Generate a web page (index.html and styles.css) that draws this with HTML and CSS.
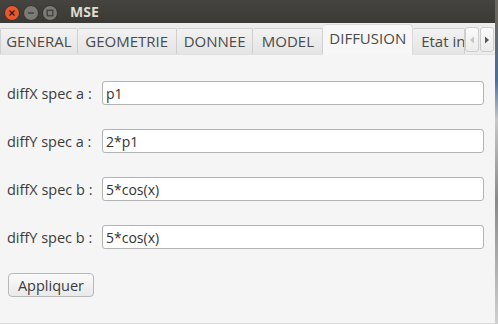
FILE: index.html
```html
<!DOCTYPE html>
<html lang="fr">
<head>
  <meta charset="UTF-8">
  <title>MSE</title>
  <link rel="stylesheet" href="styles.css">
</head>
<body>

<div class="fenetre">
  <div class="titre">
    <div class="boutons">
      <span class="rond fermer">
        <svg width="8" height="8" viewBox="0 0 8 8"><path d="M1.5 1.5 L6.5 6.5 M6.5 1.5 L1.5 6.5" stroke="#3a1a0c" stroke-width="1.3"/></svg>
      </span>
      <span class="rond">
        <svg width="8" height="8" viewBox="0 0 8 8"><path d="M1 4 H7" stroke="#3c3b37" stroke-width="1.3"/></svg>
      </span>
      <span class="rond">
        <svg width="8" height="8" viewBox="0 0 8 8"><rect x="1.2" y="1.2" width="5.6" height="5.6" fill="none" stroke="#3c3b37" stroke-width="1.2"/></svg>
      </span>
    </div>
    <span class="nom">MSE</span>
  </div>

  <div class="onglets">
    <div class="onglet l78">GENERAL</div>
    <div class="onglet l99">GEOMETRIE</div>
    <div class="onglet l77">DONNEE</div>
    <div class="onglet l70">MODEL</div>
    <div class="onglet actif">DIFFUSION</div>
    <div class="onglet coupe">Etat in</div>
    <div class="fleche"><svg width="6" height="8" viewBox="0 0 6 8"><path d="M5 0.5 L1 4 L5 7.5 Z" fill="#c4c4c4"/></svg></div>
    <div class="fleche"><svg width="6" height="8" viewBox="0 0 6 8"><path d="M1 0.5 L5 4 L1 7.5 Z" fill="#5a5a5a"/></svg></div>
  </div>

  <div class="panneau">
    <label class="etiquette">diffX spec a :</label>
    <div class="champ">p1</div>
    <label class="etiquette">diffY spec a :</label>
    <div class="champ">2*p1</div>
    <label class="etiquette">diffX spec b :</label>
    <div class="champ">5*cos(x)</div>
    <label class="etiquette">diffY spec b :</label>
    <div class="champ">5*cos(x)</div>
    <div class="actions">
      <button class="appliquer">Appliquer</button>
    </div>
  </div>
</div>

<div class="fond"></div>

</body>
</html>
```

FILE: styles.css
```css
body {
  margin: 0;
  display: flex;
  width: 498px;
  height: 324px;
  overflow: hidden;
  font-family: "Open Sans", "Noto Sans", sans-serif;
  color: #3c3c3c;
}
.fenetre {
  width: 495px;
  height: 324px;
  display: flex;
  flex-direction: column;
  background: #f5f5f5;
}
.titre {
  height: 23px;
  display: flex;
  align-items: center;
  background: linear-gradient(#45443f, #3a3935);
}
.boutons {
  display: flex;
  gap: 3px;
  padding-left: 4px;
  padding-top: 3px;
}
.rond {
  width: 14px;
  height: 14px;
  border-radius: 50%;
  background: #7b7a75;
  display: flex;
  align-items: center;
  justify-content: center;
  border: 1px solid #35342f;
}
.rond.fermer {
  background: #e8582a;
}
.nom {
  margin-left: 12px;
  font-weight: bold;
  font-size: 14px;
  color: #dfdbd2;
}
.onglets {
  height: 32px;
  display: flex;
  align-items: flex-end;
  background: #ececec;
  border-bottom: 1px solid #e2e2e2;
  box-sizing: border-box;
}
.onglet {
  height: 26px;
  box-sizing: border-box;
  padding-bottom: 1px;
  display: flex;
  align-items: center;
  justify-content: center;
  font-size: 15px;
  color: #4a4a4a;
  border: 1px solid #cfcfcf;
  border-bottom: none;
  border-left: none;
  border-radius: 2px 2px 0 0;
  background: linear-gradient(#f2f2f2, #e4e4e4);
  white-space: nowrap;
}
.l78 { width: 78px; border-left: 1px solid #cfcfcf; }
.l99 { width: 99px; }
.l77 { width: 77px; }
.l70 { width: 70px; }
.onglet.actif {
  width: 90px;
  height: 31px;
  padding-bottom: 5px;
  background: #f7f7f7;
  border-color: #dadada;
  border-radius: 4px 4px 0 0;
  margin-bottom: -1px;
}
.onglet.coupe {
  width: 52px;
  overflow: hidden;
  justify-content: flex-start;
  padding-left: 8px;
}
.fleche {
  width: 14px;
  height: 25px;
  margin: 0 1px 2px 0;
  box-sizing: border-box;
  border: 1px solid #cdcdcd;
  border-radius: 3px;
  background: linear-gradient(#fafafa, #ececec);
  display: flex;
  align-items: center;
  justify-content: center;
}
.panneau {
  flex: 1;
  display: grid;
  grid-template-columns: 95px 1fr;
  row-gap: 24px;
  align-content: start;
  padding: 26px 11px 0 7px;
  border-bottom: 1px solid #dcdcdc;
}
.etiquette {
  font-size: 14.5px;
  display: flex;
  align-items: center;
  white-space: nowrap;
}
.champ {
  height: 24px;
  box-sizing: border-box;
  border: 1px solid #b4b4b4;
  border-radius: 3px;
  background: #ffffff;
  display: flex;
  align-items: center;
  padding-left: 3px;
  font-size: 14px;
  color: #333;
}
.actions {
  grid-column: 1 / 3;
  padding-left: 1px;
}
.appliquer {
  height: 24px;
  width: 86px;
  font-family: inherit;
  font-size: 14.5px;
  color: #3c3c3c;
  border: 1px solid #b8b8b8;
  border-radius: 4px;
  background: linear-gradient(#fbfbfb, #e9e9e9);
  padding: 0;
}
.fond {
  flex: 1;
  background: linear-gradient(#6a6760 0, #6a6760 20px, #4a6fa0 80px, #c8c8c8 120px, #8a8a8a 200px, #d0d0d0 324px);
}
```
